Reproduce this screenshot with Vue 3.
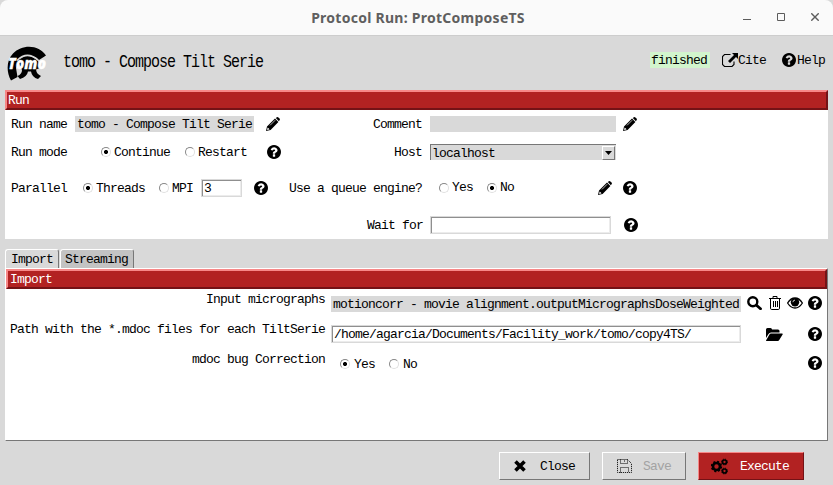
<script setup>
import { ref } from 'vue'

const runName = ref('tomo - Compose Tilt Serie')
const threads = ref('3')
const waitFor = ref('')
const mdocPath = ref('/home/agarcia/Documents/Facility_work/tomo/copy4TS/')
</script>

<template>
  <div class="window">
    <svg class="defs" width="0" height="0">
      <symbol id="help" viewBox="128 128 1536 1536">
        <path d="M1024 1376v-192q0-14-9-23t-23-9h-192q-14 0-23 9t-9 23v192q0 14 9 23t23 9h192q14 0 23-9t9-23zm256-672q0-88-55.5-163t-138.5-116-170-41q-243 0-371 213-15 24 8 42l132 100q7 6 19 6 16 0 25-12 53-68 86-92 34-24 86-24 48 0 85.5 26t37.5 59q0 38-20 61t-68 45q-63 28-115.5 86.5t-52.5 125.5v36q0 14 9 23t23 9h192q14 0 23-9t9-23q0-19 21.5-49.5t54.5-49.5q32-18 49-28.5t46-35 44.5-48 28-60.5 12.5-81zm384 192q0 209-103 385.5t-279.5 279.5-385.5 103-385.5-103-279.5-279.5-103-385.5 103-385.5 279.5-279.5 385.5-103 385.5 103 279.5 279.5 103 385.5z" />
      </symbol>
      <symbol id="pencil" viewBox="0 0 14 14">
        <path d="M9 1.600 12.400 5 4.600 12.900 0 14 1 9.600zM9.800 1 10.900.2Q11.700-.2 12.400.4L13.600 1.600Q14.200 2.300 13.700 3.100L12.900 4.200z" />
        <path d="M1.700 10.400 3.600 12.300 1.600 12.900 1.100 12.400z" fill="#fff" />
        <path d="M4 8.400 9.200 3.200" stroke="#fff" stroke-width=".7" />
      </symbol>
      <symbol id="search" viewBox="0 0 15 14">
        <circle cx="5.800" cy="5.700" r="4.500" fill="none" stroke="#000" stroke-width="2.400" />
        <path d="M9.500 9.200 13.500 12.800" stroke="#000" stroke-width="2.800" stroke-linecap="round" />
      </symbol>
      <symbol id="trash" viewBox="0 0 12 14">
        <path d="M0 2.500h12M4 2V.5h4V2M1.500 3v9.200q0 1.300 1.200 1.300h6.600q1.200 0 1.200-1.300V3M4.500 5v6M6.500 5v6M8.500 5v6" fill="none" stroke="#000" />
      </symbol>
      <symbol id="eye" viewBox="0 0 16 12">
        <path d="M.6 6Q3.700 1 8 1T15.400 6Q12.300 11 8 11T.6 6z" fill="#fff" stroke="#000" stroke-width="1.300" />
        <circle cx="8" cy="5.200" r="4.200" />
        <path d="M5.900 5.200Q6 3.200 8 3.100" fill="none" stroke="#fff" stroke-width=".8" />
      </symbol>
    </svg>

    <header class="titlebar">
      <span class="caption">Protocol Run: ProtComposeTS</span>
      <div class="controls">
        <svg width="8" height="8"><path d="M0 6.500h8" /></svg>
        <svg width="8" height="8"><path d="M.5.500h7v7h-7z" /></svg>
        <svg width="8" height="8"><path d="M.3.300 7.700 7.700M7.700.300.3 7.700" stroke-width="1.400" /></svg>
      </div>
    </header>

    <section class="heading">
      <svg class="logo" width="40" height="35" viewBox="0 0 40 35">
        <path d="M4 34.500C-1 26-.5 14 6 7.500 15-2 32-1.500 39 9.500L32 14C26 8 17 8 13 13L9 22 10.500 31z" />
        <path d="M11 15Q20 5 31 15L33 22 29 23.500Q29.500 28 34 30L31 33Q25 31.500 24 25.500H21Q20 31 13 33L10.500 30Q15 28 15 24z" />
        <path d="M10 14.500Q20 4.500 31 14" fill="none" stroke="#d9d9d9" stroke-width="1.500" />
        <text x="1" y="22.500" textLength="38" lengthAdjust="spacingAndGlyphs">Tomo</text>
      </svg>
      <h1>tomo - Compose Tilt Serie</h1>
      <span class="status">finished</span>
      <a class="cite">
        <svg width="16" height="14" viewBox="0 0 16 14">
          <path d="M8.500 1.500H2.500L.500 3.500v8l2 2h7.500l2-2V8.500" fill="none" stroke="#000" stroke-width="1.100" />
          <path d="M10 0h6v6l-2-2-6 6-2-2 6-6z" />
        </svg><span class="text">Cite</span></a>
      <a class="help-link"><svg class="q"><use href="#help" /></svg><span class="text">Help</span></a>
    </section>

    <section class="run">
      <div class="bar">Run</div>
      <div class="row">
        <span class="left-label text">Run name</span>
        <span class="readonly name">{{ runName }}</span>
        <svg class="q after-name"><use href="#pencil" /></svg>
        <span class="right-label text">Comment</span>
        <span class="readonly comment"></span>
        <svg class="q last"><use href="#pencil" /></svg>
      </div>
      <div class="row">
        <span class="left-label text">Run mode</span>
        <div class="choices mode">
          <label><i class="radio on"></i><span class="text">Continue</span></label>
          <label><i class="radio"></i><span class="text">Restart</span></label>
        </div>
        <svg class="q"><use href="#help" /></svg>
        <span class="right-label host-label text">Host</span>
        <div class="combo"><span>localhost</span><b><svg width="7" height="4"><path d="M0 0h7L3.500 4z" /></svg></b></div>
      </div>
      <div class="row tall">
        <span class="left-label text">Parallel</span>
        <div class="choices parallel">
          <label><i class="radio on"></i><span class="text">Threads</span></label>
          <label><i class="radio"></i><span class="text">MPI</span></label>
        </div>
        <input v-model="threads" class="entry threads">
        <svg class="q after-threads"><use href="#help" /></svg>
        <span class="right-label queue-label text">Use a queue engine?</span>
        <div class="choices queue">
          <label><i class="radio"></i>Yes</label>
          <label><i class="radio on"></i>No</label>
        </div>
        <svg class="q"><use href="#pencil" /></svg>
        <svg class="q queue-help"><use href="#help" /></svg>
      </div>
      <div class="row wait">
        <span class="right-label wait-label text">Wait for</span>
        <input v-model="waitFor" class="entry wait-entry">
        <svg class="q wait-help"><use href="#help" /></svg>
      </div>
    </section>

    <nav class="tabs">
      <span class="tab active">Import</span>
      <span class="tab">Streaming</span>
    </nav>

    <section class="pane">
      <div class="bar">Import</div>
      <div class="param">
        <span class="param-label">Input micrographs</span>
        <span class="readonly value">motioncorr - movie alignment.outputMicrographsDoseWeighted</span>
        <div class="tools">
          <svg width="15" height="14"><use href="#search" /></svg>
          <svg class="bin" width="12" height="14"><use href="#trash" /></svg>
          <svg class="view" width="16" height="12"><use href="#eye" /></svg>
          <svg class="q"><use href="#help" /></svg>
        </div>
      </div>
      <div class="param path">
        <span class="param-label">Path with the *.mdoc files for each TiltSerie</span>
        <input v-model="mdocPath" class="entry value">
        <div class="tools">
          <svg class="folder" width="17" height="13" viewBox="0 0 17 13">
            <path d="M0 10V1.500Q0 0 1.500 0h3Q6 0 6 1.500h6q1.500 0 1.500 1.500v1.500H5Q3.500 4.500 2.500 6z" />
            <path d="M5 5.500h11.200q1 0 .4 1l-3.200 5.300q-.7 1.200-1.700 1.200H.5q-.8 0-.2-1l3-5.300Q4 5.500 5 5.500z" />
          </svg>
          <svg class="q"><use href="#help" /></svg>
        </div>
      </div>
      <div class="param">
        <span class="param-label">mdoc bug Correction</span>
        <div class="choices value correction">
          <label><i class="radio on"></i><span class="text">Yes</span></label>
          <label><i class="radio"></i><span class="text">No</span></label>
        </div>
        <div class="tools"><svg class="q"><use href="#help" /></svg></div>
      </div>
    </section>

    <footer class="actions">
      <button class="close">
        <svg width="12" height="12" viewBox="0 0 12 12"><path d="M1.500 1.500 10.500 10.500M10.500 1.500 1.500 10.500" stroke="#000" stroke-width="3.600" /></svg><span class="text">Close</span>
      </button>
      <button class="save" disabled>
        <svg width="15" height="14" viewBox="0 0 15 14"><path d="M.5.500h10l4 4v9H.5zM3.500.500v4h7v-4M3.500 13.500v-5h8v5M7.500 1.500v2" fill="none" stroke="#000" stroke-dasharray="1 1" /></svg><span class="text">Save</span>
      </button>
      <button class="execute">
        <svg width="17" height="17" viewBox="0 0 17 17" fill="none" stroke="#000">
          <circle cx="5.500" cy="8.500" r="3.500" stroke-width="2.600" />
          <circle cx="5.500" cy="8.500" r="4.900" stroke-width="1.600" stroke-dasharray="2 1.850" />
          <circle cx="13.500" cy="4" r="2" stroke-width="1.700" />
          <circle cx="13.500" cy="4" r="2.900" stroke-width="1" stroke-dasharray="1.300 .98" />
          <circle cx="13.500" cy="13" r="2" stroke-width="1.700" />
          <circle cx="13.500" cy="13" r="2.900" stroke-width="1" stroke-dasharray="1.300 .98" />
        </svg><span class="text">Execute</span>
      </button>
    </footer>
  </div>
</template>

<style>
body { background: #d9d9d9; overflow: hidden; }
</style>

<style scoped>
* { box-sizing: border-box; }
.window {
  width: 833px; height: 485px; background: #d9d9d9; color: #000;
  font: 13px/18px "Liberation Mono", monospace; letter-spacing: -0.802px;
  white-space: nowrap;
}
.defs { display: block; }
svg { flex: none; }
.text { padding-top: 2px; }
.titlebar {
  display: grid; grid-template-columns: 1fr auto 1fr; align-items: center;
  height: 36px; background: #fafafa; border-bottom: 1px solid #cdcdcd;
  border-top-left-radius: 8px; border-top-right-radius: 8px;
}
.caption {
  grid-column: 2; font: bold 14px/20px "Noto Sans", sans-serif;
  letter-spacing: 0.26px; color: #5f5f5f; padding-left: 3px;
}
.controls { display: flex; justify-content: flex-end; gap: 26px; padding: 0 14px 1px 0; }
.controls svg { fill: none; stroke: #5c5c5c; }
.heading { display: flex; align-items: center; height: 54px; padding: 0 7px; }
.logo { margin-top: 1px; }
.logo text { font: italic 800 15px "Open Sans", sans-serif; letter-spacing: 0; fill: #fff; stroke: #fff; stroke-width: .3px; }
h1 {
  flex: none; margin: 0 0 0 16px; width: 587px; font-size: 15px; font-weight: 400;
  line-height: 20px; letter-spacing: -1.002px; transform: scaleY(1.22);
}
.status { flex: none; width: 60px; height: 16px; padding-left: 1px; margin-top: -6px; background: #d2f5cd; }
.cite, .help-link { display: flex; align-items: center; margin-top: -6px; }
.cite { margin-left: 12px; }
.help-link { margin-left: 16px; gap: 1px; }
.q { width: 14px; height: 14px; }
.bar {
  height: 20px; padding-left: 1px; color: #fff; background: #b22222;
  border: 2px solid; border-color: #f78888 #741216 #741216 #f78888;
}
.run { margin: 0 5px; height: 149px; background: #fff; }
.row { display: flex; align-items: center; height: 28px; padding-left: 6px; }
.row.tall { height: 44px; }
.row.wait { height: 30px; }
.left-label { width: 64px; flex: none; }
.readonly { height: 16px; background: #d9d9d9; padding-left: 2px; flex: none; }
.name { width: 179px; }
.after-name { margin-left: 12px; }
.right-label { width: 142px; margin-right: 8px; text-align: right; flex: none; }
.comment { width: 186px; }
.last { margin-left: 7px; }
.choices, .choices label { display: flex; align-items: center; }
.choices { flex: none; }
.choices label { gap: 3px; }
.radio {
  width: 10px; height: 10px; border: 1px solid; border-radius: 50%;
  border-color: #888 #e0e0e0 #e0e0e0 #888; background: #fff; flex: none;
}
.radio.on { background: radial-gradient(circle, #000 0 1.8px, #fff 2.300px); }
.mode { width: 192px; padding-left: 26px; gap: 15px; }
.host-label { width: 141px; }
.combo {
  display: flex; justify-content: space-between; width: 186px; height: 16px; line-height: 17px;
  background: #d9d9d9; border-top: 1px solid #777; border-left: 1px solid #777; padding-left: 1px;
}
.combo b {
  display: flex; align-items: center; justify-content: center; width: 13px; height: 14px;
  margin: 1px 1px 0 0; border: 1px solid; border-color: #fff #777 #777 #fff;
}
.parallel { width: 126px; padding-left: 8px; gap: 14px; }
.entry {
  height: 18px; padding: 1px 2px 0; border: 1px solid #d9d9d9; box-shadow: inset 1px 1px #8f8f8f, inset -1px -1px #ececec;
  border-radius: 0; outline: none; background: #fff; color: #000; font: inherit; letter-spacing: inherit; flex: none;
}
.threads { width: 41px; }
.after-threads { margin-left: 12px; }
.queue-label { width: 154px; }
.queue { width: 168px; padding-left: 9px; gap: 14px; }
.queue-help { margin-left: 11px; }
.wait-label { width: 412px; }
.wait-entry { width: 181px; margin-left: -1px; }
.wait-help { margin-left: 13px; }
.tabs { display: flex; gap: 1px; height: 29px; padding: 10px 5px 0; }
.tab {
  width: 74px; height: 19px; padding: 1px 0 0 4px; line-height: 18px; background: #c3c3c3; border: 1px solid;
  border-color: #fff #777 transparent #fff; border-bottom: 0; border-radius: 3px 3px 0 0;
}
.tab.active { width: 54px; padding-left: 5px; background: #d9d9d9; }
.pane {
  height: 173px; margin: 0 5px; background: #fff; border: 1px solid;
  border-color: #fff #777 #777 #fff;
}
.pane .bar { padding-left: 2px; }
.param { display: grid; grid-template-columns: 319px 410px 1fr; column-gap: 6px; height: 30px; }
.param-label { text-align: right; padding-top: 2px; }
.value { margin-top: 7px; width: 410px; }
.entry.value { margin-top: 6px; }
.correction { align-self: start; height: 16px; padding-left: 9px; gap: 14px; }
.correction label { gap: 4px; }
.tools { display: flex; align-items: center; height: 14px; margin-top: 7px; padding-right: 5px; }
.tools .bin { margin-left: 7px; }
.tools .view { margin-left: 6px; }
.tools .q { margin-left: auto; }
.path .tools { margin-top: 8px; }
.folder { margin-left: 19px; }
.actions { display: flex; justify-content: flex-end; gap: 12px; padding: 11px 29px 0; }
button {
  display: flex; align-items: center; height: 28px; padding: 0; font: inherit; letter-spacing: inherit;
  color: #000; background: #d9d9d9; border: 1px solid; border-color: #fff #777 #777 #fff; border-radius: 0;
}
.close { width: 91px; padding-left: 14px; gap: 14px; }
.save { width: 84px; padding-left: 14px; gap: 11px; color: #a3a3a3; }
.execute { width: 106px; padding-left: 12px; gap: 12px; color: #fff; background: #b22222; border-color: #f78888 #741216 #741216 #f78888; }
</style>
